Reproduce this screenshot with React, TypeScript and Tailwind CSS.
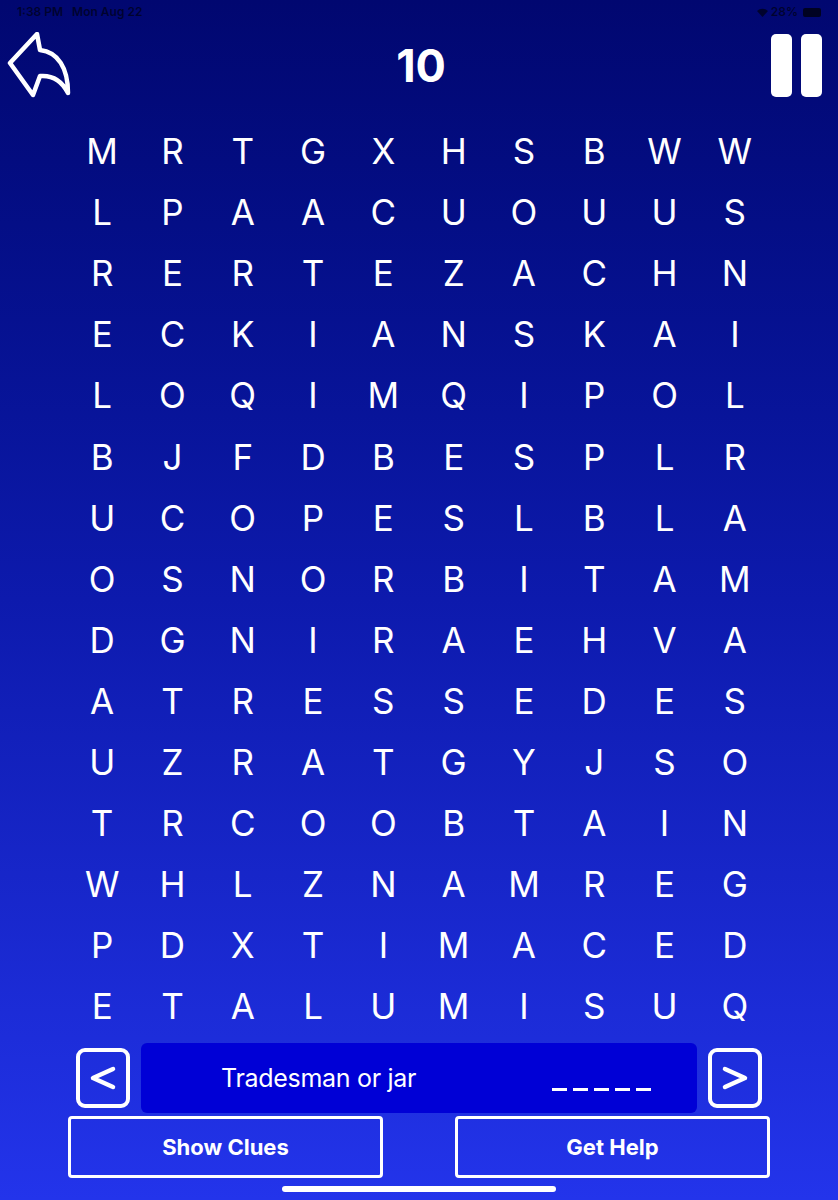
import React from "react";

const GRID = [
  "MRTGXHSBWW",
  "LPAACUOUUS",
  "RERTEZACHN",
  "ECKIANSKAI",
  "LOQIMQIPOL",
  "BJFDBESPLR",
  "UCOPESLBLA",
  "OSNORBITAM",
  "DGNIRAEHVA",
  "ATRESSEDES",
  "UZRATGYJSO",
  "TRCOOBTAIN",
  "WHLZNAMREG",
  "PDXTIMACED",
  "ETALUMISUQ",
];

function BackArrow() {
  return (
    <svg width="64" height="66" viewBox="0 0 64 66" fill="none">
      <path
        d="M3 31 L30 2 L33 18 C51 20 61 36 61 61 C55 49 45 43 33 44 L26 63 Z"
        stroke="white"
        strokeWidth="4.5"
        strokeLinejoin="round"
      />
    </svg>
  );
}

function Chevron({ dir }: { dir: "left" | "right" }) {
  return (
    <svg width="28" height="26" viewBox="0 0 28 26" fill="none">
      <path
        d={dir === "left" ? "M24 4 L4 13 L24 22" : "M4 4 L24 13 L4 22"}
        stroke="white"
        strokeWidth="4.5"
        strokeLinecap="round"
        strokeLinejoin="round"
      />
    </svg>
  );
}

export default function App() {
  return (
    <div
      className="flex h-[1200px] w-[838px] flex-col overflow-hidden bg-gradient-to-b from-[#010770] via-[#0d1aad] to-[#2334eb] text-white"
      style={{ fontFamily: "Inter, 'Noto Sans', sans-serif" }}
    >
      {/* status bar */}
      <div className="flex h-[24px] items-center justify-between px-[17px] text-[12px] font-semibold text-black/60">
        <span>1:38 PM&nbsp;&nbsp;&nbsp;Mon Aug 22</span>
        <div className="flex items-center gap-[3px]">
          <svg width="11" height="9" viewBox="0 0 11 9">
            <path d="M5.5 9 L0 3 A8 8 0 0 1 11 3 Z" fill="rgba(0,0,0,0.6)" />
          </svg>
          <span>28%</span>
          <div className="ml-[2px] h-[9px] w-[18px] rounded-[2px] bg-black/70" />
        </div>
      </div>

      {/* header */}
      <div className="mt-[8px] flex h-[66px] items-center justify-between pl-[7px] pr-[16px]">
        <BackArrow />
        <div className="text-[45px] font-bold leading-none">10</div>
        <div className="flex gap-[9px]">
          <div className="h-[63px] w-[21px] rounded-[5px] bg-white" />
          <div className="h-[63px] w-[21px] rounded-[5px] bg-white" />
        </div>
      </div>

      {/* letter grid */}
      <div className="ml-[67px] mt-[23px] grid w-[703px] grid-cols-10">
        {GRID.flatMap((row, r) =>
          row.split("").map((ch, c) => (
            <div
              key={`${r}-${c}`}
              className="flex h-[61.1px] items-center justify-center text-[35px] font-normal leading-none"
            >
              {ch}
            </div>
          ))
        )}
      </div>

      {/* clue row */}
      <div className="mt-[6px] flex h-[70px] items-center pl-[76px]">
        <div className="flex h-[60px] w-[54px] items-center justify-center rounded-[9px] border-[4px] border-white">
          <Chevron dir="left" />
        </div>
        <div className="ml-[11px] flex h-[70px] w-[556px] items-center rounded-[6px] bg-[#0000d6]">
          <span className="ml-[80px] text-[25px] tracking-[-0.3px]">Tradesman or jar</span>
          <div className="ml-auto mr-[46px] mt-[22px] flex gap-[6px]">
            {[0, 1, 2, 3, 4].map((i) => (
              <div key={i} className="h-[3px] w-[15px] bg-white" />
            ))}
          </div>
        </div>
        <div className="ml-[11px] flex h-[60px] w-[54px] items-center justify-center rounded-[9px] border-[4px] border-white">
          <Chevron dir="right" />
        </div>
      </div>

      {/* buttons */}
      <div className="mt-[3px] flex h-[62px] justify-between pl-[68px] pr-[68px]">
        <div className="flex w-[315px] items-center justify-center rounded-[4px] border-[3px] border-white text-[22px] font-bold">
          Show Clues
        </div>
        <div className="flex w-[315px] items-center justify-center rounded-[4px] border-[3px] border-white text-[22px] font-bold">
          Get Help
        </div>
      </div>

      {/* home indicator */}
      <div className="mx-auto mt-[8px] h-[6px] w-[274px] rounded-full bg-white" />
    </div>
  );
}
